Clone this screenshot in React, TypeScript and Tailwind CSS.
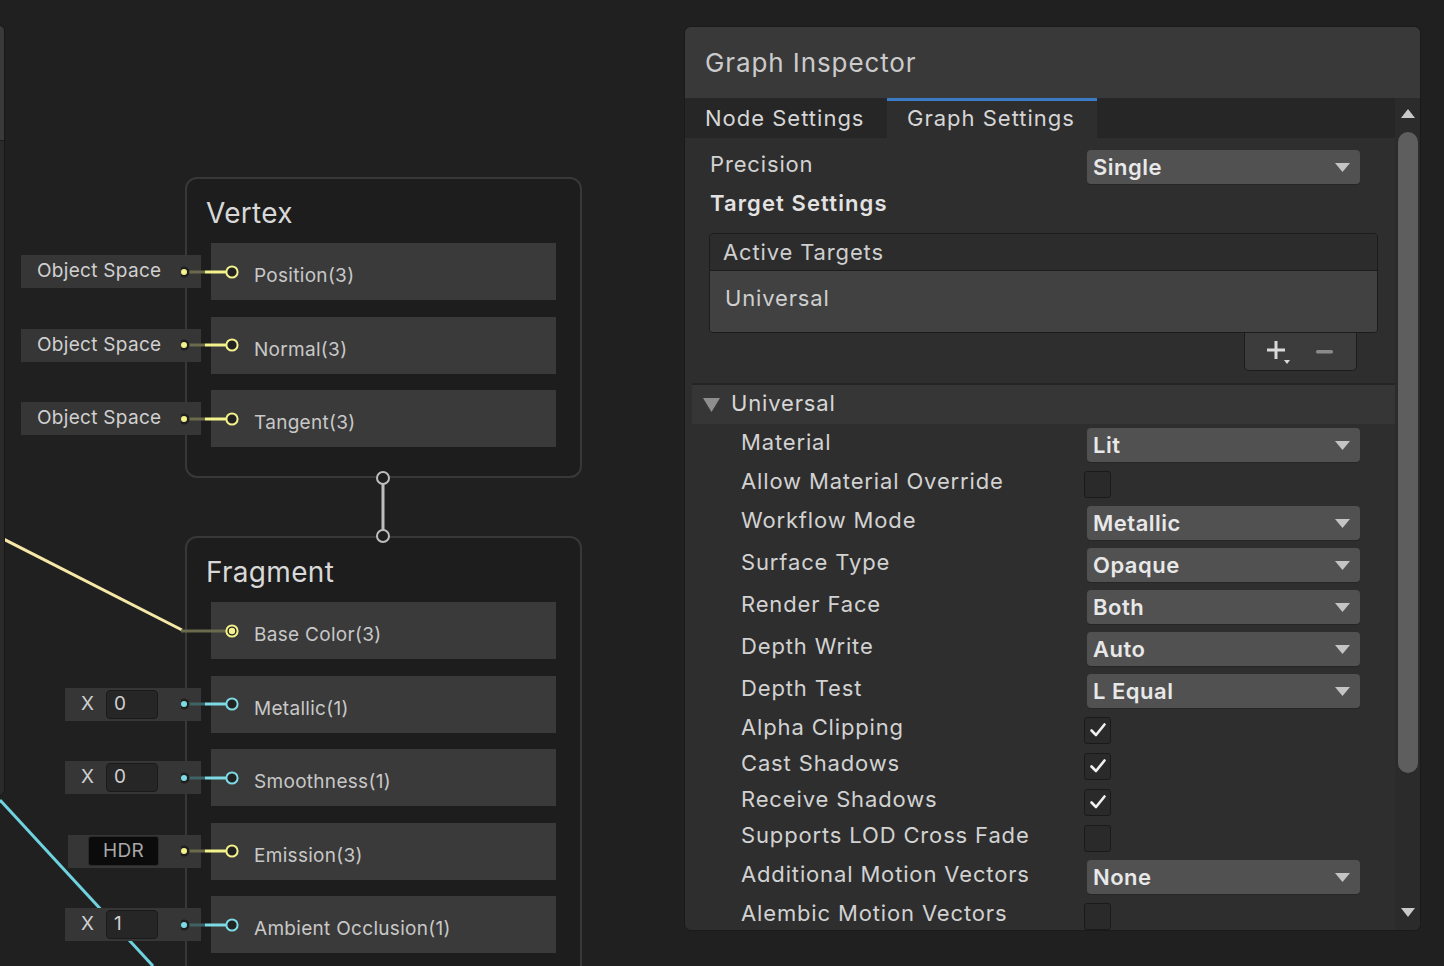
import type { ReactNode } from "react";

type PortColor = "yellow" | "cyan";

const portColors: Record<PortColor, { bright: string; dim: string }> = {
  yellow: { bright: "#f3f28c", dim: "#6a6a4c" },
  cyan: { bright: "#7ddbe5", dim: "#3e6367" },
};

function ObjectSpaceInput() {
  return (
    <div className="flex h-[33px] w-[180px] items-center bg-[#363636] pl-[16px] text-[19px] tracking-[0.3px] text-[#d0d0d0]">
      Object Space
    </div>
  );
}

function FloatInput({ value }: { value: string }) {
  return (
    <div className="flex h-[33px] w-[136px] items-center bg-[#363636] pl-[16px] text-[19px] text-[#d0d0d0]">
      <span className="w-[25px]">X</span>
      <div className="flex h-[29px] w-[52px] items-center rounded-[4px] border border-[#1a1a1a] bg-[#262626] pl-[7px]">
        {value}
      </div>
    </div>
  );
}

function HdrInput() {
  return (
    <div className="flex h-[33px] w-[133px] items-center bg-[#363636] pl-[20px] text-[19px]">
      <div className="flex h-[30px] w-[71px] items-center justify-center rounded-[3px] border border-[#2a2a2a] bg-[#0b0b0b] text-[#a8a8a8]">
        HDR
      </div>
    </div>
  );
}

interface PortRowProps {
  label: string;
  color: PortColor;
  input?: ReactNode;
  connected?: boolean;
}

function PortRow({ label, color, input, connected }: PortRowProps) {
  const c = portColors[color];
  return (
    <div className="relative flex h-[57px] items-center bg-[#3a3a3a] pl-[43px] text-[19px] tracking-[0.3px] text-[#c8c8c8]">
      {input && <div className="absolute right-[calc(100%+10px)] top-[12px]">{input}</div>}
      <svg className="absolute left-[-30px] top-[18.5px]" width="60" height="20" viewBox="0 0 60 20">
        {connected ? (
          <line x1="0" y1="10" x2="45" y2="10" stroke={c.dim} strokeWidth="3" />
        ) : (
          <>
            <line x1="7" y1="10" x2="24" y2="10" stroke={c.dim} strokeWidth="3" />
            <line x1="24" y1="10" x2="45" y2="10" stroke={c.bright} strokeWidth="3" />
            <circle cx="3" cy="10" r="5.5" fill="#1f1f1f" />
            <circle cx="3" cy="10" r="3" fill={c.bright} />
          </>
        )}
        <circle cx="51" cy="10" r="5.6" fill="#222222" stroke={c.bright} strokeWidth="2" />
        {connected && <circle cx="51" cy="10" r="3.2" fill={c.bright} />}
      </svg>
      <span className="pt-[10px]">{label}</span>
    </div>
  );
}

function GraphNode({ title, top, height, children }: { title: string; top: number; height: number; children: ReactNode }) {
  return (
    <div
      className="absolute left-[185px] flex w-[397px] flex-col rounded-[12px] border-2 border-[#383838] bg-[#1d1d1d] px-[24px]"
      style={{ top, height }}
    >
      <div className="flex h-[64px] shrink-0 items-center text-[28px] tracking-[0.3px] text-[#d8d8d8]">
        <span className="ml-[-5px] pt-[4px]">{title}</span>
      </div>
      <div className="flex flex-col gap-[16.5px]">{children}</div>
    </div>
  );
}

function Dropdown({ value }: { value: string }) {
  return (
    <div className="flex h-[34px] w-[273px] shrink-0 items-center justify-between rounded-[4px] bg-[#515151] pl-[6px] pr-[10px] shadow-[0_1px_0_#262626]">
      <span className="text-[22px] font-semibold tracking-[0.5px] text-[#e8e8e8]">{value}</span>
      <svg width="15" height="9" viewBox="0 0 15 9">
        <path d="M0 0 H15 L7.5 9 Z" fill="#c4c4c4" />
      </svg>
    </div>
  );
}

function Checkbox({ checked }: { checked?: boolean }) {
  return (
    <div className="ml-[-3px] flex h-[27px] w-[27px] shrink-0 items-center justify-center rounded-[3px] border border-[#1a1a1a] bg-[#2a2a2a]">
      {checked && (
        <svg width="22" height="22" viewBox="0 0 22 22">
          <path d="M4.5 11.5 L9 16 L17.5 5.5" fill="none" stroke="#f0f0f0" strokeWidth="2.6" strokeLinecap="round" strokeLinejoin="round" />
        </svg>
      )}
    </div>
  );
}

const settings: { label: string; dropdown?: string; checked?: boolean }[] = [
  { label: "Material", dropdown: "Lit" },
  { label: "Allow Material Override", checked: false },
  { label: "Workflow Mode", dropdown: "Metallic" },
  { label: "Surface Type", dropdown: "Opaque" },
  { label: "Render Face", dropdown: "Both" },
  { label: "Depth Write", dropdown: "Auto" },
  { label: "Depth Test", dropdown: "L Equal" },
  { label: "Alpha Clipping", checked: true },
  { label: "Cast Shadows", checked: true },
  { label: "Receive Shadows", checked: true },
  { label: "Supports LOD Cross Fade", checked: false },
  { label: "Additional Motion Vectors", dropdown: "None" },
  { label: "Alembic Motion Vectors", checked: false },
];

function Inspector() {
  return (
    <div className="absolute left-[684px] top-[26px] flex h-[905px] w-[737px] flex-col overflow-hidden rounded-[7px] border border-[#1a1a1a] bg-[#2e2e2e] text-[22px] tracking-[0.85px] text-[#d2d2d2]">
      <div className="flex h-[71px] shrink-0 items-center bg-[#393939] px-[20px] text-[26px] tracking-[0.9px] text-[#cbcbcb]">
        Graph Inspector
      </div>
      <div className="flex min-h-0 flex-1">
        <div className="flex min-w-0 flex-1 flex-col">
          <div className="flex h-[40px] shrink-0 bg-[#262626] tracking-[1px]">
            <div className="flex w-[202px] items-center pl-[20px] text-[#d6d6d6]">Node Settings</div>
            <div className="flex w-[210px] items-center border-t-[3px] border-[#3b7bc6] bg-[#2e2e2e] pb-[2px] pl-[20px] text-[#d6d6d6]">
              Graph Settings
            </div>
          </div>
          <div className="flex flex-col pt-[8px]">
            <div className="flex h-[42px] items-center justify-between pl-[25px] pr-[35px]">
              <span className="pb-[5px]">Precision</span>
              <Dropdown value="Single" />
            </div>
            <div className="flex h-[30px] items-center pl-[25px] font-semibold tracking-[1.1px] text-[#e2e2e2]">Target Settings</div>
            <div className="ml-[24px] mr-[17px] mt-[15px] overflow-hidden rounded-[4px] border border-[#1c1c1c]">
              <div className="flex h-[37px] items-center border-b border-[#1c1c1c] bg-[#2c2c2c] pl-[13px] text-[#cfcfcf]">
                Active Targets
              </div>
              <div className="flex h-[61px] items-start bg-[#414141] pl-[15px] pt-[11px] text-[#cfcfcf]">Universal</div>
            </div>
            <div className="flex justify-end pr-[38px]">
              <div className="flex h-[38px] w-[113px] items-center gap-[24px] rounded-b-[5px] border border-t-0 border-[#1c1c1c] bg-[#3c3c3c] pl-[19px]">
                <svg width="28" height="28" viewBox="0 0 28 28">
                  <path d="M12 3 V21 M3 12 H21" stroke="#dadada" strokeWidth="3" />
                  <path d="M20 22 H26 L23 26 Z" fill="#dadada" />
                </svg>
                <svg width="17" height="4" viewBox="0 0 17 4">
                  <rect x="0" y="0" width="17" height="3.5" rx="1.5" fill="#8a8a8a" />
                </svg>
              </div>
            </div>
            <div className="ml-[7px] mt-[12px] flex h-[41px] items-center gap-[11px] border-t-2 border-[#242424] bg-[#363636] pl-[11px]">
              <svg width="17" height="14" viewBox="0 0 17 14">
                <path d="M0 0 H17 L8.5 14 Z" fill="#8e8e8e" />
              </svg>
              <span className="pb-[2px] text-[#d6d6d6]">Universal</span>
            </div>
            <div className="flex flex-col pl-[56px] pr-[35px]">
              {settings.map((s) => (
                <div key={s.label} className={`flex items-center justify-between ${s.dropdown ? "h-[42px]" : "h-[36px]"}`}>
                  <span className="pb-[5px]">{s.label}</span>
                  {s.dropdown ? (
                    <Dropdown value={s.dropdown} />
                  ) : (
                    <div className="w-[273px]">
                      <Checkbox checked={s.checked} />
                    </div>
                  )}
                </div>
              ))}
            </div>
          </div>
        </div>
        <div className="flex w-[25px] shrink-0 flex-col items-center bg-[#2b2b2b] pb-[13px] pt-[11px]">
          <svg width="14" height="9" viewBox="0 0 14 9">
            <path d="M7 0 L14 9 H0 Z" fill="#c8c8c8" />
          </svg>
          <div className="mt-[14px] h-[641px] w-[20px] rounded-full bg-[#5e5e5e]" />
          <div className="flex-1" />
          <svg width="14" height="9" viewBox="0 0 14 9">
            <path d="M0 0 H14 L7 9 Z" fill="#c8c8c8" />
          </svg>
        </div>
      </div>
    </div>
  );
}

export default function App() {
  return (
    <div className="relative h-[966px] w-[1444px] overflow-hidden bg-[#202020] font-['Inter',sans-serif]">
      {/* wires under the nodes */}
      <svg className="absolute left-0 top-0" width="700" height="966" viewBox="0 0 700 966">
        <line x1="-20" y1="527" x2="182" y2="630" stroke="#f6e9a8" strokeWidth="3" />
        <line x1="0" y1="800" x2="153" y2="966" stroke="#6fd3df" strokeWidth="3" />
      </svg>

      {/* partially visible node at the left edge */}
      <div className="absolute left-[-22px] top-[25px] flex h-[771px] w-[27px] flex-col overflow-hidden rounded-[6px] border border-[#171717] bg-[#2a2a2a]">
        <div className="h-[115px] border-b border-[#1c1c1c] bg-[#3a3a3a]" />
      </div>

      <GraphNode title="Vertex" top={177} height={301}>
        <PortRow label="Position(3)" color="yellow" input={<ObjectSpaceInput />} />
        <PortRow label="Normal(3)" color="yellow" input={<ObjectSpaceInput />} />
        <PortRow label="Tangent(3)" color="yellow" input={<ObjectSpaceInput />} />
      </GraphNode>

      <GraphNode title="Fragment" top={536} height={460}>
        <PortRow label="Base Color(3)" color="yellow" connected />
        <PortRow label="Metallic(1)" color="cyan" input={<FloatInput value="0" />} />
        <PortRow label="Smoothness(1)" color="cyan" input={<FloatInput value="0" />} />
        <PortRow label="Emission(3)" color="yellow" input={<HdrInput />} />
        <PortRow label="Ambient Occlusion(1)" color="cyan" input={<FloatInput value="1" />} />
      </GraphNode>

      {/* flow link between the vertex and fragment blocks */}
      <svg className="absolute left-[373px] top-[468px]" width="20" height="78" viewBox="0 0 20 78">
        <line x1="10" y1="16" x2="10" y2="62" stroke="#bdbdbd" strokeWidth="3" />
        <circle cx="10" cy="10" r="6" fill="#1e1e1e" stroke="#bdbdbd" strokeWidth="2" />
        <circle cx="10" cy="68" r="6" fill="#1e1e1e" stroke="#bdbdbd" strokeWidth="2" />
      </svg>

      <Inspector />
    </div>
  );
}
